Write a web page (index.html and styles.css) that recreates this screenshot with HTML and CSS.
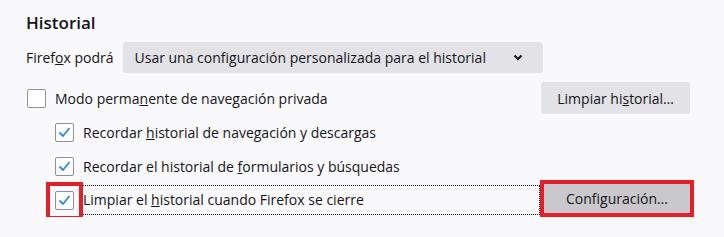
FILE: index.html
```html
<!DOCTYPE html>
<html lang="es">
<head>
  <meta charset="UTF-8" />
  <meta name="viewport" content="width=device-width, initial-scale=1.0" />
  <title>Historial</title>
  <link rel="stylesheet" href="styles.css">
</head>
<body>
  <section class="history">
    <h2 class="section-title">Historial</h2>

    <div class="mode-row">
      <span class="mode-label">Firef<u>o</u>x podrá</span>
      <div class="select">
        <span>Usar una configuración personalizada para el historial</span>
        <svg class="chevron" width="10" height="7" viewBox="0 0 10 7">
          <path d="M1.5 1.5 L5 5 L8.5 1.5" fill="none" stroke="#15141a" stroke-width="2" />
        </svg>
      </div>
    </div>

    <div class="option-row first">
      <div class="check">
        <span class="box"></span>
        <span class="check-text">Modo perma<u>n</u>ente de navegación privada</span>
      </div>
      <button class="btn btn-clear">Limpiar hi<u>s</u>torial…</button>
    </div>

    <div class="sub-options">
      <div class="option-row">
        <div class="check">
          <span class="box checked">
            <svg width="19" height="19" viewBox="0 0 19 19"><path d="M4.5 9.5 L8 13 L14.5 5" fill="none" stroke="#2f87d6" stroke-width="1.8" /></svg>
          </span>
          <span class="check-text">Recordar <u>h</u>istorial de navegación y descargas</span>
        </div>
      </div>
      <div class="option-row">
        <div class="check">
          <span class="box checked">
            <svg width="19" height="19" viewBox="0 0 19 19"><path d="M4.5 9.5 L8 13 L14.5 5" fill="none" stroke="#2f87d6" stroke-width="1.8" /></svg>
          </span>
          <span class="check-text">Recordar el historial de <u>f</u>ormularios y búsquedas</span>
        </div>
      </div>
      <div class="option-row">
        <div class="check grow">
          <span class="box checked marked">
            <svg width="19" height="19" viewBox="0 0 19 19"><path d="M4.5 9.5 L8 13 L14.5 5" fill="none" stroke="#2f87d6" stroke-width="1.8" /></svg>
          </span>
          <span class="check-text focused">Limpiar el <u>h</u>istorial cuando Firefox se cierre</span>
        </div>
        <button class="btn btn-settings">Confi<u>g</u>uración…</button>
      </div>
    </div>
  </section>
</body>
</html>
```

FILE: styles.css
```css
body {
  margin: 0;
  background: #f9f9fb;
  color: #15141a;
  font-family: 'Open Sans', 'Noto Sans', sans-serif;
  font-size: 14px;
}
.history {
  padding: 11px 34px 0 26px;
}
.section-title {
  margin: 0;
  font-size: 17px;
  line-height: 24px;
  font-weight: 600;
}
.mode-row {
  display: flex;
  align-items: center;
  gap: 9px;
  margin-top: 7px;
}
.select {
  width: 420px;
  height: 31px;
  box-sizing: border-box;
  padding: 0 20px 0 12px;
  display: flex;
  align-items: center;
  justify-content: space-between;
  background: #e2e2e7;
  border-radius: 3px;
}
.chevron {
  display: block;
}
.option-row {
  display: flex;
  align-items: center;
  justify-content: space-between;
  height: 34px;
}
.option-row.first {
  height: 32px;
  margin-top: 9px;
  margin-bottom: 1px;
}
.sub-options {
  padding-left: 28px;
}
.check {
  display: flex;
  align-items: center;
  padding-left: 1px;
}
.check.grow {
  flex: 1;
  margin-right: 5px;
}
.box {
  width: 19px;
  height: 19px;
  box-sizing: border-box;
  border: 1px solid #8f8f9d;
  border-radius: 2px;
  background: #fff;
  position: relative;
  flex-shrink: 0;
}
.box svg {
  position: absolute;
  left: -1px;
  top: -1px;
}
/* red annotation frame around the checkbox */
.box.marked::after {
  content: '';
  position: absolute;
  left: -10px;
  top: -10px;
  width: 29px;
  height: 30px;
  border: 4px solid #e3202a;
}
.check-text {
  margin-left: 7px;
  padding: 0 2px;
}
.check-text.focused {
  flex: 1;
  height: 28px;
  line-height: 28px;
  box-sizing: border-box;
  outline: 1px dotted #15141a;
  margin-left: 6px;
  padding-left: 3px;
}
.btn {
  font: inherit;
  color: inherit;
  border: 0;
  border-radius: 3px;
  background: #e2e2e7;
  cursor: pointer;
}
.btn-clear {
  height: 32px;
  padding: 0 16px;
}
.btn-settings {
  width: 146px;
  height: 29px;
  padding: 0;
  margin-top: -4px;
  background: #c9c9cd;
  border-radius: 0;
  outline: 4px solid #e3202a;
}
```
